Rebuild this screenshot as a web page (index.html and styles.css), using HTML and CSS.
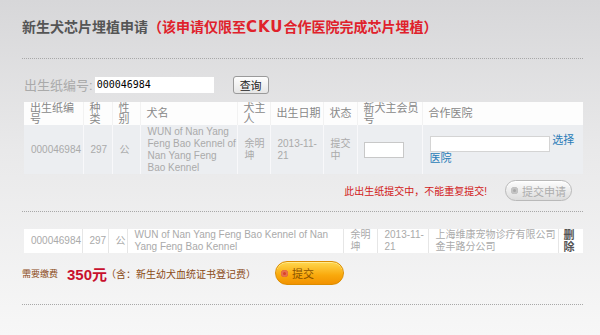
FILE: index.html
```html
<!DOCTYPE html>
<html>
<head>
  <link rel="stylesheet" href="styles.css">
</head>
<body>
  <div class="page">
    <div class="title-bar">
      <h1 class="title">新生犬芯片埋植申请<span class="title-note">（该申请仅限至<span class="cku">CKU</span>合作医院完成芯片埋植）</span></h1>
    </div>

    <div class="search">
      <label class="search-label">出生纸编号:</label>
      <input class="search-input" type="text" value="000046984">
      <button class="search-btn">查询</button>
    </div>

    <table class="grid grid-apply">
      <colgroup>
        <col style="width:59px"><col style="width:29px"><col style="width:28px">
        <col style="width:97px"><col style="width:33px"><col style="width:53px">
        <col style="width:34px"><col style="width:65px"><col style="width:161px">
      </colgroup>
      <thead>
        <tr>
          <th>出生纸编号</th>
          <th>种类</th>
          <th>性别</th>
          <th>犬名</th>
          <th>犬主人</th>
          <th>出生日期</th>
          <th>状态</th>
          <th>新犬主会员号</th>
          <th>合作医院</th>
        </tr>
      </thead>
      <tbody>
        <tr>
          <td>000046984</td>
          <td>297</td>
          <td>公</td>
          <td class="name">WUN of Nan Yang Feng Bao Kennel of Nan Yang Feng Bao Kennel</td>
          <td>余明坤</td>
          <td>2013-11-21</td>
          <td>提交中</td>
          <td><input class="member-input" type="text"></td>
          <td class="hospital"><input class="hospital-input" type="text"> <a class="pick" href="#">选择医院</a></td>
        </tr>
      </tbody>
    </table>

    <div class="notice">
      <span class="notice-text">此出生纸提交中，不能重复提交!</span>
      <button class="pill pill-gray"><span class="dot"></span>提交申请</button>
    </div>

    <div class="divider"></div>

    <table class="grid grid-list">
      <colgroup>
        <col style="width:58px"><col style="width:26px"><col style="width:19px">
        <col style="width:216px"><col style="width:34px"><col style="width:51px">
        <col style="width:130px"><col style="width:25px">
      </colgroup>
      <tbody>
        <tr>
          <td>000046984</td>
          <td>297</td>
          <td>公</td>
          <td>WUN of Nan Yang Feng Bao Kennel of Nan Yang Feng Bao Kennel</td>
          <td>余明坤</td>
          <td>2013-11-21</td>
          <td>上海维康宠物诊疗有限公司金丰路分公司</td>
          <td class="del">删除</td>
        </tr>
      </tbody>
    </table>

    <div class="fee">
      <span class="fee-label">需要缴费</span>
      <span class="fee-amount">350元</span>
      <span class="fee-note">（含：新生幼犬血统证书登记费）</span>
      <button class="pill pill-orange"><span class="dot"></span>提交</button>
    </div>

    <div class="divider"></div>
  </div>
</body>
</html>
```

FILE: styles.css
```css
body {
  margin: 0;
  height: 335px;
  font-family: "Liberation Sans", "Noto Sans CJK SC", sans-serif;
  background: linear-gradient(#d7d7d9, #e9e9ea 45%, #f7f7f7);
  overflow: hidden;
}

.page {
  padding: 18px 17px 0 22px;
}

.title-bar {
  padding-bottom: 22px;
  border-bottom: 1px dotted #a8a8a8;
}

.title {
  margin: 0;
  font-size: 14px;
  line-height: 18px;
  font-weight: bold;
  color: #555;
}

.title-note {
  color: #e0212b;
}

.title .cku {
  font-family: "DejaVu Sans", sans-serif;
  font-size: 15px;
  letter-spacing: 1px;
}

.search {
  display: flex;
  align-items: center;
  height: 17px;
  margin-top: 17px;
  padding-left: 2px;
}

.search-label {
  font-size: 13px;
  color: #aaa;
}

.search-input {
  width: 119px;
  height: 16px;
  box-sizing: border-box;
  margin-left: 2px;
  padding: 0 2px;
  border: none;
  background: #fff;
  font-family: "DejaVu Sans Mono", monospace;
  font-size: 10px;
  color: #000;
}

.search-btn {
  margin-left: 19px;
  width: 36px;
  height: 18px;
  padding: 0;
  border: 1px solid #9a9a9a;
  border-radius: 3px;
  background: linear-gradient(#fefefe, #e6e6e6);
  font-family: "Noto Sans CJK SC", sans-serif;
  font-size: 11px;
  color: #222;
}

/* tables */
.grid {
  table-layout: fixed;
  border-collapse: collapse;
  width: 559px;
  margin-left: 2px;
  font-size: 10px;
  line-height: 12px;
}

.grid th,
.grid td {
  padding: 0 0 0 7px;
  text-align: left;
  vertical-align: middle;
  border-left: 1px solid #f2f2f2;
}

.grid th:first-child,
.grid td:first-child {
  border-left: none;
}

.grid-apply {
  margin-top: 9px;
}

.grid-apply th {
  height: 23px;
  padding-left: 6px;
  padding-right: 2px;
  background: #fdfdfd;
  font-size: 11px;
  line-height: 11px;
  font-weight: normal;
  color: #888;
}

.grid-apply td {
  height: 49px;
  background: #eceef1;
  border-left-color: #f8f8fa;
  color: #aaa;
}

.member-input {
  width: 40px;
  height: 16px;
  box-sizing: border-box;
  margin-left: -1px;
  border: 1px solid #c8c8c8;
  background: #fff;
}

.hospital {
  padding-right: 4px !important;
}

.hospital-input {
  width: 120px;
  height: 16px;
  box-sizing: border-box;
  border: 1px solid #d4d4d4;
  background: #fff;
  vertical-align: -4px;
}

.pick {
  font-size: 11px;
  color: #2a7db8;
  text-decoration: none;
}

.notice {
  display: flex;
  justify-content: flex-end;
  align-items: center;
  margin-top: 6px;
  height: 21px;
  padding-right: 11px;
}

.notice-text {
  margin-right: 18px;
  font-size: 10px;
  color: #d21a1a;
}

.pill {
  display: flex;
  align-items: center;
  flex: none;
  border-radius: 12px;
  font-family: "Noto Sans CJK SC", sans-serif;
}

.pill .dot {
  flex: none;
  border-radius: 50%;
}

.pill-gray {
  width: 67px;
  height: 21px;
  padding: 0 0 0 5px;
  border: 1px solid #b9b9b9;
  background: linear-gradient(#fdfdfd, #dcdcdc);
  box-shadow: inset 0 1px 0 #fff;
  font-size: 11px;
  color: #adadad;
}

.pill-gray .dot {
  width: 7px;
  height: 7px;
  margin-right: 4px;
  background: #a9a9a9;
  box-shadow: inset 0 0 0 2px #c4c4c4;
}

.divider {
  border-bottom: 1px dotted #a8a8a8;
}

.notice + .divider {
  margin-top: 10px;
}

.grid-list {
  margin-top: 17px;
}

.grid-list td {
  height: 24px;
  padding-right: 2px;
  background: #fff;
  border-left-color: #e6e6e6;
  color: #aaa;
}

.grid-list td.del {
  padding-left: 5px;
  font-size: 11px;
  line-height: 12px;
  font-weight: bold;
  color: #555;
}

.fee {
  display: flex;
  align-items: center;
  margin-top: 8px;
  height: 24px;
  margin-bottom: 19px;
  color: #8a4a16;
}

.fee-label {
  font-size: 9px;
}

.fee-note {
  margin-left: -1px;
  margin-right: 19px;
  font-size: 10px;
}

.fee-amount {
  margin-left: 9px;
  font-size: 15px;
  font-weight: bold;
  color: #c8102e;
}

.pill-orange {
  width: 69px;
  height: 24px;
  padding: 0 0 0 5px;
  border: 1px solid #dc8d00;
  background: linear-gradient(#ffd84f, #f9a90c 60%, #f29200);
  box-shadow: inset 0 1px 0 #ffe98c;
  font-size: 11px;
  color: #8a5200;
}

.pill-orange .dot {
  width: 7px;
  height: 7px;
  margin-right: 4px;
  background: #d8432b;
  box-shadow: inset 0 0 0 2px #e8704a;
}
```
